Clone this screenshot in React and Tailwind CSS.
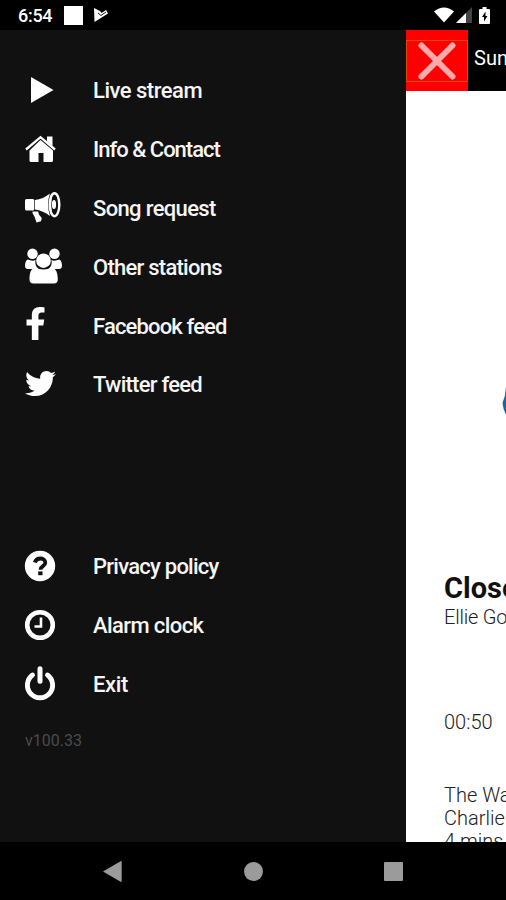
import { FaTwitter, FaFacebookF } from 'react-icons/fa';

const Icon = ({ children }) => (
    <svg className="w-10 h-10" viewBox="0 0 40 40" fill="currentColor">
        {children}
    </svg>
);

const PlayIcon = () => (
    <Icon>
        <path d="M7 7l22.5 13L7 33z" />
    </Icon>
);

const HomeIcon = () => (
    <Icon>
        <path d="M16.5 11L29 21.500v10a1.500 1.500 0 01-1.500 1.500H19.500v-9h-5v9H7a1.500 1.500 0 01-1.500-1.500v-10z" />
        <path d="M23 7.500h5.500v9.500l-5.500-4.500z" />
        <path d="M2 20.500L16.500 8.200 31 20.500" fill="none" stroke="currentColor" strokeWidth="2.300" />
    </Icon>
);

const BullhornIcon = () => (
    <Icon>
        <rect x="1" y="11" width="9.300" height="11.500" rx="1.500" />
        <path d="M11 12q8-1 15-6.500Q22 16 26 28 19 22.500 11 21.500z" />
        <ellipse cx="30.500" cy="16.700" rx="4.800" ry="11.500" fill="none" stroke="currentColor" strokeWidth="2.400" />
        <path d="M27 6.500q-3 10 0 20l1.500.5q-2.500-10.500 0-21z" />
        <ellipse cx="30" cy="16.500" rx="2.100" ry="4.500" />
        <path d="M8.500 23.500h5.500q.5 3.500 3.800 6.500l-.8 3.300-4.500 1.200q-1.500-6-4-9.500z" />
    </Icon>
);

const UsersIcon = () => (
    <Icon>
        <circle cx="8.500" cy="6.800" r="5.200" />
        <circle cx="30.500" cy="6.800" r="5.200" />
        <path d="M3.500 12.500q5 2 8 .5-1 6 3 9H3q-2-.5-2-3 0-5 2.500-6.500z" />
        <path d="M35.500 12.500q-5 2-8 .5 1 6-3 9H36q2-.5 2-3 0-5-2.500-6.500z" />
        <circle cx="19.500" cy="13.700" r="7.300" />
        <path d="M11 20.500q8.500 4 17 0c4 1 5.800 5 5.800 12q0 4-4 4H9.500q-4 0-4-4c0-7 1.500-11 5.500-12z" />
    </Icon>
);

const FacebookIcon = () => (
    <div className="w-10 h-10 flex items-center pl-px pb-1">
        <FaFacebookF className="w-[21px] h-[33px]" preserveAspectRatio="none" viewBox="0 0 320 512" />
    </div>
);

const TwitterIcon = () => (
    <div className="w-10 h-10 flex items-center pl-px pb-0.5">
        <FaTwitter className="w-[31px] h-[31px]" />
    </div>
);

const QuestionIcon = () => (
    <Icon>
        <circle cx="16" cy="20" r="15.200" />
        <path d="M10.800 16.500c1-3 3-4 5.500-4s5 1.500 5 4.200c0 3.600-4.800 3.300-4.800 7" fill="none" stroke="#111" strokeWidth="3.800" />
        <rect x="14.200" y="25.400" width="4.300" height="3.800" fill="#111" />
    </Icon>
);

const ClockIcon = () => (
    <Icon>
        <circle cx="16" cy="20" r="12.800" fill="none" stroke="currentColor" strokeWidth="4.600" />
        <path d="M17 12.500v9h-6.500" fill="none" stroke="currentColor" strokeWidth="2.600" />
    </Icon>
);

const PowerIcon = () => (
    <Icon>
        <g fill="none" stroke="currentColor" strokeLinecap="round">
            <path d="M8.500 11a12.600 12.600 0 1015 0" strokeWidth="4.900" />
            <path d="M16 4.800v12.500" strokeWidth="5" />
        </g>
    </Icon>
);

const mainItems = [
    { label: 'Live stream', icon: PlayIcon, spacing: 'tracking-[-0.5px]' },
    { label: 'Info & Contact', icon: HomeIcon, spacing: 'tracking-[-1px]' },
    { label: 'Song request', icon: BullhornIcon, spacing: 'tracking-[-0.65px]' },
    { label: 'Other stations', icon: UsersIcon, spacing: 'tracking-[-0.75px]' },
    { label: 'Facebook feed', icon: FacebookIcon, spacing: 'tracking-[-0.85px]' },
    { label: 'Twitter feed', icon: TwitterIcon, spacing: 'tracking-[-0.75px]' },
];

const otherItems = [
    { label: 'Privacy policy', icon: QuestionIcon, spacing: 'tracking-[-0.75px]' },
    { label: 'Alarm clock', icon: ClockIcon, spacing: 'tracking-[-0.6px]' },
    { label: 'Exit', icon: PowerIcon, spacing: 'tracking-[-0.4px]' },
];

const MenuItem = ({ item }) => (
    <li className="h-[58.8px] flex items-center pl-6 gap-[29px]">
        <item.icon />
        <span className={`pt-0.5 text-[22px] leading-none font-medium text-[#f5f5f5] whitespace-nowrap ${item.spacing}`}>{item.label}</span>
    </li>
);

const StatusBar = () => (
    <div className="h-[30px] shrink-0 bg-black text-white flex items-center">
        <span className="ml-[18px] w-[46px] text-[18px] leading-none font-medium tracking-[-0.3px] pt-0.5">6:54</span>
        <span className="w-[19px] h-[19px] bg-white" />
        <svg className="ml-[11px] w-[15px] h-[16px]" viewBox="0 0 15 16" fill="currentColor">
            <path d="M0 1l6 3 1.500 2L12 3l2 3.500L0.500 15z" />
            <path d="M4 6l3 2.500L12 5" fill="none" stroke="#000" strokeWidth="0.900" />
        </svg>
        <div className="ml-auto mr-4 flex items-center">
            <svg className="w-[20px] h-[16px]" viewBox="0 0 20 16" fill="currentColor">
                <path d="M0 4.500Q10-3.500 20 4.500L10 15.500z" />
            </svg>
            <svg className="ml-[2px] w-[16px] h-[16px]" viewBox="0 0 16 16">
                <path d="M16 0v16H0z" fill="#444" />
                <path d="M10 6v10H0z" fill="#fff" />
            </svg>
            <svg className="ml-[7px] w-[11px] h-[17px]" viewBox="0 0 11 17">
                <path d="M3.500 0h4v2H10q1 0 1 1v13q0 1-1 1H1q-1 0-1-1V3q0-1 1-1h2.500z" fill="#fff" />
                <path d="M6.500 4.500L3 10h2v4.500L8.500 9h-2z" fill="#000" />
            </svg>
        </div>
    </div>
);

const Drawer = () => (
    <nav className="w-[406px] shrink-0 bg-[#111] text-white pt-[31px]">
        <ul>
            {mainItems.map((item) => (
                <MenuItem key={item.label} item={item} />
            ))}
        </ul>
        <ul className="mt-[123px]">
            {otherItems.map((item) => (
                <MenuItem key={item.label} item={item} />
            ))}
        </ul>
        <p className="mt-4 pl-[25px] text-[16px] leading-6 text-[#4b4b4b]">v100.33</p>
    </nav>
);

const Player = () => (
    <main className="w-[100px] shrink-0 overflow-hidden bg-white text-[#222] whitespace-nowrap flex flex-col">
        <header className="h-[61px] shrink-0 bg-black flex">
            <button className="w-[62px] h-[61px] shrink-0 bg-[#f00] flex items-center">
                <span className="w-[62px] h-[42px] border border-[#d84a00] flex items-center justify-center">
                    <svg className="w-[38px] h-[38px] shrink-0" viewBox="0 0 38 38" fill="none" stroke="#ffaaaa" strokeWidth="6" strokeLinecap="round">
                        <path d="M3.500 3.500l31 31M34.500 3.500l-31 31" />
                    </svg>
                </span>
            </button>
            <span className="ml-1.5 text-[20px] leading-[57px] text-white">Sun</span>
        </header>
        <div className="h-[481px] shrink-0 pt-[288px]">
            {/* Cover art, only its left tip shows beside the drawer */}
            <svg className="ml-24 w-[4px] h-[50px]" viewBox="0 0 4 50">
                <path d="M4 8Q3.500 17 .5 24 1 30 4 36z" fill="#1567a8" />
            </svg>
        </div>
        <div className="pl-[38px]">
            <h1 className="text-[29px] leading-[33px] font-bold text-[#111]">Close</h1>
            <p className="text-[20px] leading-6 font-light tracking-[-0.2px]">Ellie Go</p>
            <p className="mt-[81px] text-[20px] leading-6 font-light">00:50</p>
            <p className="mt-[50px] text-[20px] leading-[23px] font-light">The Wa</p>
            <p className="text-[20px] leading-[23px] font-light">Charlie</p>
            <p className="text-[20px] leading-[23px] font-light">4 mins</p>
        </div>
    </main>
);

const NavBar = () => (
    <div className="h-[58px] shrink-0 bg-black text-[#9b9b9b] flex items-center">
        <svg className="ml-[103px] w-[19px] h-[21px]" viewBox="0 0 19 21" fill="currentColor">
            <path d="M0 10.500L18 0q.7 0 .7 1v19q0 1-.7 1z" />
        </svg>
        <span className="ml-[122px] w-[19px] h-[19px] rounded-full bg-[#9b9b9b]" />
        <span className="ml-[121px] w-[19px] h-[19px] rounded-[1px] bg-[#9b9b9b]" />
    </div>
);

const App = () => {
    return (
        <div className="w-[506px] h-[900px] overflow-hidden bg-black flex flex-col font-['Roboto',sans-serif]">
            <StatusBar />
            <div className="h-[812px] shrink-0 flex overflow-hidden">
                <Drawer />
                <Player />
            </div>
            <NavBar />
        </div>
    );
};

export default App;
